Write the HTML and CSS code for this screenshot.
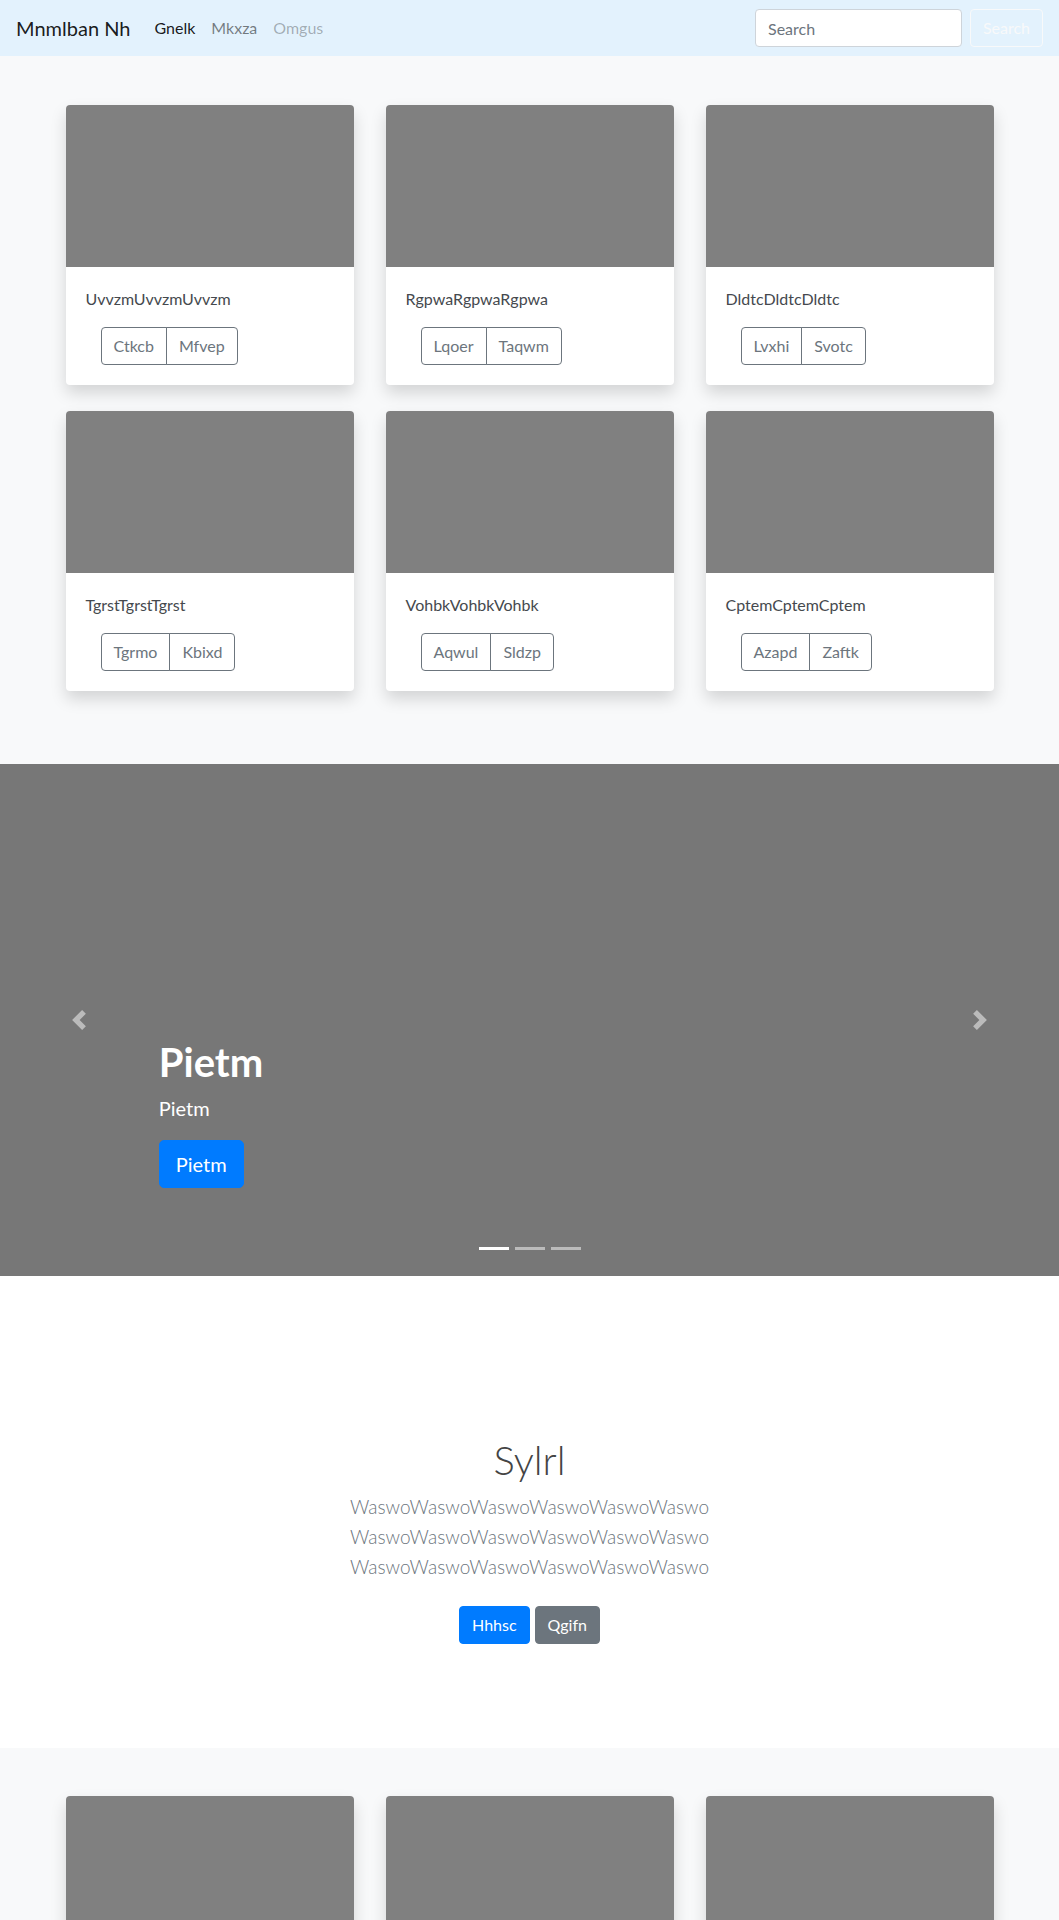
FILE: index.html
```html
<!DOCTYPE html>
<html lang="en">
<head>
<meta charset="utf-8">
<title>Mnmlban Nh</title>
<link rel="stylesheet" href="styles.css">
</head>
<body>
<nav class="navbar">
  <a class="brand" href="#">Mnmlban Nh</a>
  <ul class="nav">
    <li><a class="nav-link active" href="#">Gnelk</a></li>
    <li><a class="nav-link" href="#">Mkxza</a></li>
    <li><a class="nav-link disabled" href="#">Omgus</a></li>
  </ul>
  <form class="search">
    <input class="search-input" type="search" placeholder="Search">
    <button class="search-btn" type="button">Search</button>
  </form>
</nav>

<section class="album">
  <div class="grid">
    <div class="card">
      <div class="card-img"></div>
      <div class="card-body">
        <p class="card-text">UvvzmUvvzmUvvzm</p>
        <div class="btn-group"><button class="btn-outline first">Ctkcb</button><button class="btn-outline last">Mfvep</button></div>
      </div>
    </div>
    <div class="card">
      <div class="card-img"></div>
      <div class="card-body">
        <p class="card-text">RgpwaRgpwaRgpwa</p>
        <div class="btn-group"><button class="btn-outline first">Lqoer</button><button class="btn-outline last">Taqwm</button></div>
      </div>
    </div>
    <div class="card">
      <div class="card-img"></div>
      <div class="card-body">
        <p class="card-text">DldtcDldtcDldtc</p>
        <div class="btn-group"><button class="btn-outline first">Lvxhi</button><button class="btn-outline last">Svotc</button></div>
      </div>
    </div>
    <div class="card">
      <div class="card-img"></div>
      <div class="card-body">
        <p class="card-text">TgrstTgrstTgrst</p>
        <div class="btn-group"><button class="btn-outline first">Tgrmo</button><button class="btn-outline last">Kbixd</button></div>
      </div>
    </div>
    <div class="card">
      <div class="card-img"></div>
      <div class="card-body">
        <p class="card-text">VohbkVohbkVohbk</p>
        <div class="btn-group"><button class="btn-outline first">Aqwul</button><button class="btn-outline last">Sldzp</button></div>
      </div>
    </div>
    <div class="card">
      <div class="card-img"></div>
      <div class="card-body">
        <p class="card-text">CptemCptemCptem</p>
        <div class="btn-group"><button class="btn-outline first">Azapd</button><button class="btn-outline last">Zaftk</button></div>
      </div>
    </div>
  </div>
</section>

<section class="carousel">
  <a class="ctrl prev" href="#" aria-label="Previous">
    <svg viewBox="0 0 8 8" width="20" height="20"><path fill="#fff" d="M5.25 0l-4 4 4 4 1.5-1.5-2.5-2.5 2.5-2.5-1.5-1.5z"/></svg>
  </a>
  <a class="ctrl next" href="#" aria-label="Next">
    <svg viewBox="0 0 8 8" width="20" height="20"><path fill="#fff" d="M2.75 0l-1.5 1.5 2.5 2.5-2.5 2.5 1.5 1.5 4-4-4-4z"/></svg>
  </a>
  <div class="caption">
    <h1 class="caption-title">Pietm</h1>
    <p class="caption-text">Pietm</p>
    <a class="btn-lg" href="#">Pietm</a>
  </div>
  <ol class="indicators">
    <li class="active"></li>
    <li></li>
    <li></li>
  </ol>
</section>

<section class="hero">
  <h1 class="hero-title">Sylrl</h1>
  <p class="lead">WaswoWaswoWaswoWaswoWaswoWaswo WaswoWaswoWaswoWaswoWaswoWaswo WaswoWaswoWaswoWaswoWaswoWaswo</p>
  <div class="actions">
    <a class="btn btn-primary" href="#">Hhhsc</a>
    <a class="btn btn-secondary" href="#">Qgifn</a>
  </div>
</section>

<section class="album album-bottom">
  <div class="grid">
    <div class="card"><div class="card-img"></div><div class="card-body tall"></div></div>
    <div class="card"><div class="card-img"></div><div class="card-body tall"></div></div>
    <div class="card"><div class="card-img"></div><div class="card-body tall"></div></div>
  </div>
</section>
</body>
</html>
```

FILE: styles.css
```css
* { box-sizing: border-box; }

body {
  margin: 0;
  font-family: "Segoe UI", Lato, "Helvetica Neue", Arial, sans-serif;
  font-size: 16px;
  line-height: 1.5;
  color: #212529;
  background: #fff;
}

a { text-decoration: none; }

/* Navbar */
.navbar {
  display: flex;
  align-items: center;
  height: 56px;
  padding: 0 16px;
  background: #e3f2fd;
}

.brand {
  font-size: 20px;
  line-height: 30px;
  margin-right: 16px;
  color: rgba(0, 0, 0, 0.9);
}

.nav {
  display: flex;
  list-style: none;
  margin: 0;
  padding: 0;
}

.nav-link {
  display: block;
  padding: 8px;
  color: rgba(0, 0, 0, 0.5);
}

.nav-link.active { color: rgba(0, 0, 0, 0.9); }
.nav-link.disabled { color: rgba(0, 0, 0, 0.3); }

.search {
  display: flex;
  gap: 8px;
  margin-left: auto;
}

.search-input {
  width: 207px;
  height: 38px;
  padding: 6px 12px;
  font: inherit;
  color: #495057;
  background: #fff;
  border: 1px solid #ced4da;
  border-radius: 4px;
}

.search-input::placeholder { color: #6c757d; }

.search-btn {
  width: 73px;
  height: 38px;
  padding: 0;
  font: inherit;
  color: #f8f9fa;
  background: transparent;
  border: 1px solid #f8f9fa;
  border-radius: 4px;
}

/* Album */
.album {
  background: #f8f9fa;
  padding: 49px 0 73px;
}

.album-bottom { padding-top: 48px; }

.grid {
  display: grid;
  grid-template-columns: repeat(3, 288px);
  column-gap: 32px;
  row-gap: 26px;
  justify-content: center;
}

.card {
  background: #fff;
  border-radius: 4px;
  overflow: hidden;
  box-shadow: 0 8px 16px rgba(0, 0, 0, 0.15);
}

.card-img {
  height: 162px;
  background: #808080;
}

.card-body { padding: 20px; }
.card-body.tall { height: 118px; }

.card-text {
  margin: 0 0 16px;
  line-height: 24px;
  color: #45494e;
}

.btn-group {
  display: inline-flex;
  margin-left: 15px;
}

.btn-outline {
  padding: 6px 12px;
  font: inherit;
  line-height: 24px;
  color: #6c757d;
  background: transparent;
  border: 1px solid #6c757d;
}

.btn-outline.first { border-radius: 4px 0 0 4px; }
.btn-outline.last { border-radius: 0 4px 4px 0; margin-left: -1px; }

/* Carousel */
.carousel {
  position: relative;
  height: 512px;
  background: #777;
  overflow: hidden;
}

.ctrl {
  position: absolute;
  top: 0;
  bottom: 0;
  width: 15%;
  display: flex;
  align-items: center;
  justify-content: center;
  opacity: 0.5;
}

.prev { left: 0; }
.next { right: 0; }

.caption {
  position: absolute;
  left: 15%;
  right: 15%;
  bottom: 88px;
  color: #fff;
}

.caption-title {
  margin: 0 0 7px;
  font-size: 40px;
  line-height: 48px;
  font-weight: 700;
}

.caption-text {
  margin: 0 0 17px;
  font-size: 20px;
  line-height: 30px;
}

.btn-lg {
  display: inline-block;
  padding: 8px 16px;
  font-size: 20px;
  line-height: 30px;
  color: #fff;
  background: #007bff;
  border: 1px solid #007bff;
  border-radius: 5px;
}

.indicators {
  position: absolute;
  left: 0;
  right: 0;
  bottom: 0;
  display: flex;
  justify-content: center;
  list-style: none;
  margin: 0 0 16px;
  padding: 0;
}

.indicators li {
  width: 30px;
  height: 3px;
  margin: 10px 3px;
  background: rgba(255, 255, 255, 0.5);
}

.indicators li.active { background: #fff; }

/* Hero */
.hero {
  text-align: center;
  padding: 160px 0 80px;
  background: #fff;
}

.hero-title {
  margin: 0 0 8px;
  font-size: 40px;
  line-height: 48px;
  font-weight: 300;
  color: #444;
}

.lead {
  max-width: 450px;
  margin: 0 auto 16px;
  font-size: 19px;
  line-height: 30px;
  font-weight: 300;
  color: #6c757d;
}

.actions {
  display: flex;
  justify-content: center;
  gap: 5px;
  margin: 0 0 16px;
}

.btn {
  display: inline-block;
  margin: 8px 0;
  padding: 6px 12px;
  line-height: 24px;
  color: #fff;
  border: 1px solid transparent;
  border-radius: 4px;
}

.btn-primary { background: #007bff; border-color: #007bff; }
.btn-secondary { background: #6c757d; border-color: #6c757d; }
```
